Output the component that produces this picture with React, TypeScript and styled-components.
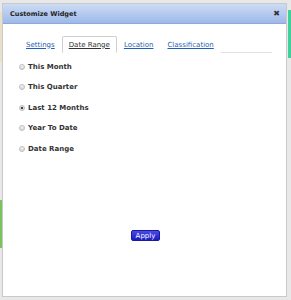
import { useState } from "react";
import styled, { createGlobalStyle } from "styled-components";

const GlobalStyle = createGlobalStyle`
  html, body {
    margin: 0;
    padding: 0;
  }
  body {
    font-family: "DejaVu Sans", Verdana, sans-serif;
  }
`;

const Backdrop = styled.div`
  width: 291px;
  height: 300px;
  box-sizing: border-box;
  padding: 3px 4px 3px 2px;
  background:
    linear-gradient(#3fd19b, #3fd19b) right 10px / 3px 48px no-repeat,
    linear-gradient(#79c25c, #79c25c) left 200px / 2px 48px no-repeat,
    linear-gradient(#eadfcb, #eadfcb) left 12px / 2px 50px no-repeat,
    #e8e8e8;
`;

const Dialog = styled.div`
  height: 100%;
  box-sizing: border-box;
  background: #fff;
  border: 1px solid #c9c9c9;
  display: flex;
  flex-direction: column;
`;

const Header = styled.div`
  height: 19px;
  flex: none;
  display: flex;
  align-items: center;
  justify-content: space-between;
  padding: 0 6px 0 7px;
  background: linear-gradient(#cddcf4, #9db9e9);
  border-bottom: 1px solid #8ea9d8;
`;

const Title = styled.span`
  font-size: 6.5px;
  font-weight: bold;
  color: #222;
`;

const Close = styled.span`
  font-size: 8px;
  font-weight: bold;
  color: #333;
  line-height: 1;
`;

const Body = styled.div`
  flex: 1;
  display: flex;
  flex-direction: column;
  padding: 12px 14px 0 16px;
`;

const TabBar = styled.div`
  display: flex;
  align-items: flex-end;
  border-bottom: 1px solid #e2e2e2;
`;

const Tab = styled.button<{ $active?: boolean }>`
  font-family: "DejaVu Sans", Verdana, sans-serif;
  font-size: 7px;
  height: 17px;
  padding: 0 6px;
  margin: 0 0 -1px;
  background: #fff;
  color: ${(p) => (p.$active ? "#333" : "#1f5fb8")};
  text-decoration: underline;
  border: 1px solid ${(p) => (p.$active ? "#cfcfcf" : "transparent")};
  border-bottom-color: ${(p) => (p.$active ? "#fff" : "transparent")};
  border-radius: 2px 2px 0 0;
  cursor: pointer;
`;

const Options = styled.div`
  display: flex;
  flex-direction: column;
  gap: 9.6px;
  padding: 8px 0 0 0;
`;

const Option = styled.label`
  display: flex;
  align-items: center;
  gap: 3px;
  height: 11px;
  font-size: 7px;
  font-weight: bold;
  color: #333;
  cursor: pointer;
`;

const Radio = styled.span<{ $checked?: boolean }>`
  width: 6px;
  height: 6px;
  border-radius: 50%;
  box-sizing: border-box;
  border: 1px solid #bdbdbd;
  background: ${(p) =>
    p.$checked
      ? "radial-gradient(circle, #444 0 1.2px, #e6e6e6 1.6px)"
      : "linear-gradient(#f4f4f4, #d8d8d8)"};
`;

const Footer = styled.div`
  display: flex;
  justify-content: center;
  margin-top: auto;
  padding-bottom: 55px;
`;

const ApplyButton = styled.button`
  font-family: "DejaVu Sans", Verdana, sans-serif;
  font-size: 7px;
  color: #fff;
  width: 29px;
  height: 11px;
  padding: 0;
  border: 1px solid #1a1aa0;
  border-radius: 2px;
  background: linear-gradient(#4a4ae8, #1c1cc4);
  cursor: pointer;
`;

const tabs = ["Settings", "Date Range", "Location", "Classification"];
const ranges = ["This Month", "This Quarter", "Last 12 Months", "Year To Date", "Date Range"];

export default function App() {
  const [tab, setTab] = useState("Date Range");
  const [range, setRange] = useState("Last 12 Months");

  return (
    <>
      <GlobalStyle />
      <Backdrop>
        <Dialog>
          <Header>
            <Title>Customize Widget</Title>
            <Close>✖</Close>
          </Header>
          <Body>
            <TabBar>
              {tabs.map((t) => (
                <Tab key={t} $active={t === tab} onClick={() => setTab(t)}>
                  {t}
                </Tab>
              ))}
            </TabBar>
            <Options>
              {ranges.map((r) => (
                <Option key={r} onClick={() => setRange(r)}>
                  <Radio $checked={r === range} />
                  {r}
                </Option>
              ))}
            </Options>
            <Footer>
              <ApplyButton>Apply</ApplyButton>
            </Footer>
          </Body>
        </Dialog>
      </Backdrop>
    </>
  );
}
